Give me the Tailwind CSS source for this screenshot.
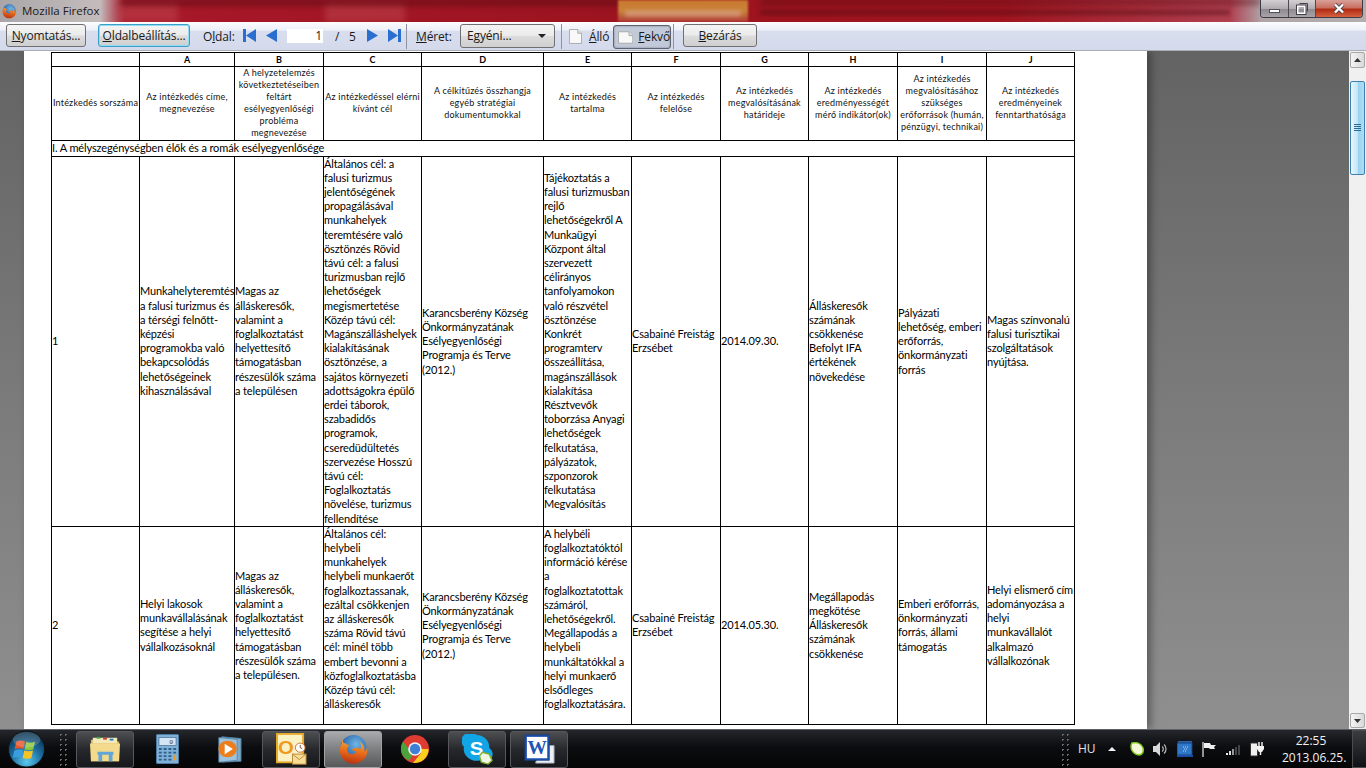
<!DOCTYPE html>
<html lang="hu">
<head>
  <meta charset="UTF-8">
  <title>Mozilla Firefox</title>
  <script src="https://cdn.jsdelivr.net/npm/@tailwindcss/browser@4"></script>
</head>
<body class="w-[1366px] h-[768px] overflow-hidden flex flex-col bg-black font-['Open_Sans',sans-serif]">

  <svg width="0" height="0" class="absolute">
    <defs>
      <radialGradient id="ffGlobe" cx="0.6" cy="0.35" r="0.7"><stop offset="0" stop-color="#6fb7e6"/><stop offset="1" stop-color="#1c4f9c"/></radialGradient>
      <linearGradient id="ffFox" x1="0.6" y1="0" x2="0.4" y2="1"><stop offset="0" stop-color="#f7b733"/><stop offset="0.55" stop-color="#e8681a"/><stop offset="1" stop-color="#b8320f"/></linearGradient>
      <symbol id="firefox" viewBox="0 0 32 32">
        <circle cx="16.5" cy="15" r="13" fill="url(#ffGlobe)"/>
        <path d="M6 6c-1 2-1 3-1 4-3 5-3 11 1 16 4 5 12 6 17 3 6-3 8-9 7-14-.5 2-1.500 3-2.500 3.500.5-4-1.500-8-5-10 2 3 2 6 .5 8-1-1.500-3-2-5-1.500-2 .5-3 1-3 2 1 1 3 .5 4 1.500-.5 2-3 3-5 2.500-3-.5-4.500-3-3.500-6 .5-1.500 1.500-2 1.500-3-1.500 0-3-1-3.500-2-1 .5-1.800.5-2.500-1.500z" fill="url(#ffFox)"/>
      </symbol>
      <symbol id="pagesheet" viewBox="0 0 14 16">
        <path d="M.5.500h9l4 4v11H.5z" fill="#f8f8f8" stroke="#a8a8a8"/><path d="M9.500.500v4h4" fill="#e2e2e2" stroke="#a8a8a8"/>
      </symbol>
    </defs>
  </svg>

  <!-- Title bar -->
  <div class="relative h-[22px] shrink-0 overflow-hidden flex items-center bg-[linear-gradient(90deg,#aaa6a8_0,#c4bcbc_100px,#a8182a_125px,#9c1420_600px,#a0141f_1000px,#b04050_1230px,#b0a4a8_1262px,#b4aeb0_100%)]">
    <div class="absolute left-[118px] top-[3px] w-[60px] h-[19px] bg-[#c04850]/50 blur-[3px]"></div>
    <div class="absolute left-[325px] top-[3px] w-[80px] h-[19px] bg-[#c04850]/50 blur-[3px]"></div>
    <div class="absolute left-[120px] top-0 w-[500px] h-[5px] bg-[#4e0a10]/70 blur-[3px]"></div>
    <div class="absolute left-[760px] top-0 w-[500px] h-[4px] bg-[#4e0a10]/70 blur-[3px]"></div>
    <div class="absolute left-[618px] top-0 w-[130px] h-[22px] bg-[linear-gradient(180deg,#c9782e_0,#c9843a_50%,#b03a38_100%)] blur-[1px]"></div>
    <div class="absolute left-[625px] top-[11px] w-[116px] h-[5px] bg-[#e2b4a8]/60 blur-[2px]"></div>
    <div class="absolute left-[760px] top-[10px] w-[470px] h-[5px] bg-[#4e0a10]/50 blur-[2px]"></div>
    <svg class="ml-[1px] w-[16px] h-[16px] shrink-0"><use href="#firefox"/></svg>
    <span class="relative ml-[5px] text-[11.500px] text-[#1a1a1a]">Mozilla Firefox</span>
    <div class="absolute left-[1260px] top-0 w-[103px] h-[18px] flex rounded-b-[4px] border border-t-0 border-[#3c3c44] overflow-hidden">
      <div class="w-[28px] flex items-center justify-center border-r border-[#4a4a52] bg-[linear-gradient(180deg,#d4d0d2_0,#b2acb0_50%,#8e8a90_55%,#a8a4a8_100%)]">
        <div class="mt-[5px] w-[11px] h-[4px] bg-white border border-[#50505a]"></div>
      </div>
      <div class="w-[27px] flex items-center justify-center border-r border-[#4a4a52] bg-[linear-gradient(180deg,#d4d0d2_0,#b2acb0_50%,#8e8a90_55%,#a8a4a8_100%)]">
        <svg width="12" height="12" viewBox="0 0 12 12"><path d="M3.500.500h8v8" fill="none" stroke="#40404a"/><rect x="1.500" y="3" width="7.500" height="7.500" fill="none" stroke="#fff" stroke-width="2"/><rect x=".5" y="2" width="9.500" height="9.500" fill="none" stroke="#40404a"/></svg>
      </div>
      <div class="flex-1 flex items-center justify-center bg-[linear-gradient(180deg,#d9a098_0,#c87062_45%,#b02c14_55%,#d86040_100%)]">
        <svg width="12" height="11" viewBox="0 0 12 11"><path d="M2 1.500l8 8M10 1.500l-8 8" stroke="#50404a" stroke-width="4"/><path d="M2 1.500l8 8M10 1.500l-8 8" stroke="#fff" stroke-width="2.400"/></svg>
      </div>
    </div>
  </div>

  <!-- Print preview toolbar -->
  <div class="h-[29px] shrink-0 flex items-start text-[12px] leading-[16px] tracking-[-0.15px] text-[#1a1a1a] bg-[linear-gradient(180deg,#fbfcfe_0,#eef1f8_28%,#d8deee_34%,#d4daeb_100%)] border-b border-[#a8adb8] [&>*]:shrink-0">
    <button class="ml-[6px] mt-[2px] w-[80px] h-[23px] rounded-[3px] border border-[#707070] bg-[linear-gradient(180deg,#f4f4f4_0,#ebebeb_48%,#dcdcdc_52%,#cfcfcf_100%)]"><u>N</u>yomtatás...</button>
    <button class="ml-[12px] mt-[2px] w-[92px] h-[23px] rounded-[3px] border border-[#3c9fc8] shadow-[inset_0_0_0_1px_#8fdcf4] bg-[linear-gradient(180deg,#f4f4f4_0,#ebebeb_48%,#dcdcdc_52%,#cfcfcf_100%)]"><u>O</u>ldalbeállítás...</button>
    <span class="ml-[13px] mt-[7px] w-[33px]">O<u>l</u>dal:</span>
    <svg class="ml-[7px] mt-[7px]" width="13" height="13" viewBox="0 0 13 13"><path d="M0 0h3v13H0zM13 0v13L3 6.500z" fill="#2a6fd0"/></svg>
    <svg class="ml-[10px] mt-[7px]" width="11" height="13" viewBox="0 0 11 13"><path d="M11 0v13L0 6.500z" fill="#2a6fd0"/></svg>
    <div class="ml-[10px] mt-[7px] w-[36px] h-[14px] bg-white text-right pr-[1px] leading-[14px]">1</div>
    <span class="ml-[12px] mt-[7px] w-[14px]">/</span>
    <span class="mt-[7px] w-[18px]">5</span>
    <svg class="mt-[7px]" width="11" height="13" viewBox="0 0 11 13"><path d="M0 0v13l11-6.500z" fill="#2a6fd0"/></svg>
    <svg class="ml-[10px] mt-[7px]" width="13" height="13" viewBox="0 0 13 13"><path d="M13 0h-3v13h3zM0 0v13l10-6.500z" fill="#2a6fd0"/></svg>
    <div class="ml-[5px] mt-[2px] w-px h-[25px] bg-[#8d92a0]"></div>
    <span class="ml-[9px] mt-[7px] w-[44px]"><u>M</u>éret:</span>
    <div class="mt-[2px] w-[95px] h-[24px] pl-[6px] pr-[8px] flex items-center justify-between rounded-[3px] border border-[#707070] bg-[linear-gradient(180deg,#f4f4f4_0,#ebebeb_48%,#dcdcdc_52%,#cfcfcf_100%)]">
      <span>Egyéni...</span>
      <svg width="8" height="4" viewBox="0 0 8 4"><path d="M0 0h8L4 4z" fill="#222"/></svg>
    </div>
    <div class="ml-[6px] mt-[2px] w-px h-[25px] bg-[#8d92a0]"></div>
    <svg class="ml-[7px] mt-[7px] w-[13px] h-[15px]"><use href="#pagesheet"/></svg>
    <span class="ml-[7px] mt-[7px] w-[24px]"><u>Á</u>lló</span>
    <div class="mt-[3px] w-[58px] h-[24px] pl-[4px] flex items-center gap-[5px] rounded-[3px] border border-[#5c6470] bg-[#c2c9d8] shadow-[inset_0_0_2px_#70788a]">
      <svg width="16" height="13" viewBox="0 0 16 13"><path d="M.5.500h11l4 4v8H.5z" fill="#f8f8f8" stroke="#a8a8a8"/><path d="M11.500.500v4h4" fill="#e2e2e2" stroke="#a8a8a8"/></svg>
      <span><u>F</u>ekvő</span>
    </div>
    <div class="ml-[2px] mt-[2px] w-px h-[25px] bg-[#8d92a0]"></div>
    <button class="ml-[9px] mt-[2px] w-[74px] h-[23px] rounded-[3px] border border-[#707070] bg-[linear-gradient(180deg,#f4f4f4_0,#ebebeb_48%,#dcdcdc_52%,#cfcfcf_100%)]"><u>B</u>ezárás</button>
  </div>

  <!-- Preview area -->
  <div class="h-[678px] shrink-0 flex overflow-hidden bg-[linear-gradient(180deg,#636363_0,#7a7a7a_50%,#8f8f8f_100%)]">
    <div class="ml-[24px] w-[1123px] h-full bg-white pl-[27px] pt-[1px] overflow-hidden shadow-[4px_0_8px_rgba(0,0,0,0.35)] font-['Lato',sans-serif] text-black">
      <table class="table-fixed border-collapse w-[1023px] text-[11px] leading-[14.2px] tracking-[-0.12px] whitespace-nowrap">
        <colgroup>
          <col class="w-[88px]"><col class="w-[95px]"><col class="w-[89px]"><col class="w-[98px]"><col class="w-[122px]"><col class="w-[88px]"><col class="w-[89px]"><col class="w-[88px]"><col class="w-[89px]"><col class="w-[89px]"><col class="w-[88px]">
        </colgroup>
        <tr class="h-[14px] text-[9px] leading-[12px] font-bold text-center [&>td]:border [&>td]:border-black [&>td]:p-0">
          <td></td><td>A</td><td>B</td><td>C</td><td>D</td><td>E</td><td>F</td><td>G</td><td>H</td><td>I</td><td>J</td>
        </tr>
        <tr class="h-[73px] text-[9px] leading-[12.100px] tracking-[0.22px] text-center text-[#111] [&>td]:border [&>td]:border-black [&>td]:p-0">
          <td>Intézkedés sorszáma</td>
          <td>Az intézkedés címe,<br>megnevezése</td>
          <td>A helyzetelemzés<br>következtetéseiben<br>feltárt<br>esélyegyenlőségi<br>probléma<br>megnevezése</td>
          <td>Az intézkedéssel elérni<br>kívánt cél</td>
          <td>A célkitűzés összhangja<br>egyéb stratégiai<br>dokumentumokkal</td>
          <td>Az intézkedés<br>tartalma</td>
          <td>Az intézkedés<br>felelőse</td>
          <td>Az intézkedés<br>megvalósításának<br>határideje</td>
          <td>Az intézkedés<br>eredményességét<br>mérő indikátor(ok)</td>
          <td>Az intézkedés<br>megvalósításához<br>szükséges<br>erőforrások (humán,<br>pénzügyi, technikai)</td>
          <td>Az intézkedés<br>eredményeinek<br>fenntarthatósága</td>
        </tr>
        <tr class="h-[16px] [&>td]:border [&>td]:border-black [&>td]:p-0">
          <td colspan="11" class="pl-px">I. A mélyszegénységben élők és a romák esélyegyenlősége</td>
        </tr>
        <tr class="h-[370px] [&>td]:border [&>td]:border-black [&>td]:p-0">
          <td>1</td>
          <td>Munkahelyteremtés<br>a falusi turizmus és<br>a térségi felnőtt-<br>képzési<br>programokba való<br>bekapcsolódás<br>lehetőségeinek<br>kihasználásával</td>
          <td>Magas az<br>álláskeresők,<br>valamint a<br>foglalkoztatást<br>helyettesítő<br>támogatásban<br>részesülők száma<br>a településen</td>
          <td>Általános cél: a<br>falusi turizmus<br>jelentőségének<br>propagálásával<br>munkahelyek<br>teremtésére való<br>ösztönzés Rövid<br>távú cél: a falusi<br>turizmusban rejlő<br>lehetőségek<br>megismertetése<br>Közép távú cél:<br>Magánszálláshelyek<br>kialakításának<br>ösztönzése, a<br>sajátos környezeti<br>adottságokra épülő<br>erdei táborok,<br>szabadidős<br>programok,<br>cseredüdültetés<br>szervezése Hosszú<br>távú cél:<br>Foglalkoztatás<br>növelése, turizmus<br>fellendítése</td>
          <td>Karancsberény Község<br>Önkormányzatának<br>Esélyegyenlőségi<br>Programja és Terve<br>(2012.)</td>
          <td>Tájékoztatás a<br>falusi turizmusban<br>rejlő<br>lehetőségekről A<br>Munkaügyi<br>Központ által<br>szervezett<br>célirányos<br>tanfolyamokon<br>való részvétel<br>ösztönzése<br>Konkrét<br>programterv<br>összeállítása,<br>magánszállások<br>kialakítása<br>Résztvevők<br>toborzása Anyagi<br>lehetőségek<br>felkutatása,<br>pályázatok,<br>szponzorok<br>felkutatása<br>Megvalósítás</td>
          <td>Csabainé Freistág<br>Erzsébet</td>
          <td>2014.09.30.</td>
          <td>Álláskeresők<br>számának<br>csökkenése<br>Befolyt IFA<br>értékének<br>növekedése</td>
          <td>Pályázati<br>lehetőség, emberi<br>erőforrás,<br>önkormányzati<br>forrás</td>
          <td>Magas színvonalú<br>falusi turisztikai<br>szolgáltatások<br>nyújtása.</td>
        </tr>
        <tr class="h-[198px] [&>td]:border [&>td]:border-black [&>td]:p-0">
          <td>2</td>
          <td>Helyi lakosok<br>munkavállalásának<br>segítése a helyi<br>vállalkozásoknál</td>
          <td>Magas az<br>álláskeresők,<br>valamint a<br>foglalkoztatást<br>helyettesítő<br>támogatásban<br>részesülők száma<br>a településen.</td>
          <td class="align-top">Általános cél:<br>helybeli<br>munkahelyek<br>helybeli munkaerőt<br>foglalkoztassanak,<br>ezáltal csökkenjen<br>az álláskeresők<br>száma Rövid távú<br>cél: minél több<br>embert bevonni a<br>közfoglalkoztatásba<br>Közép távú cél:<br>álláskeresők</td>
          <td>Karancsberény Község<br>Önkormányzatának<br>Esélyegyenlőségi<br>Programja és Terve<br>(2012.)</td>
          <td class="align-top">A helybéli<br>foglalkoztatóktól<br>információ kérése<br>a<br>foglalkoztatottak<br>számáról,<br>lehetőségekről.<br>Megállapodás a<br>helybeli<br>munkáltatókkal a<br>helyi munkaerő<br>elsődleges<br>foglalkoztatására.</td>
          <td>Csabainé Freistág<br>Erzsébet</td>
          <td>2014.05.30.</td>
          <td>Megállapodás<br>megkötése<br>Álláskeresők<br>számának<br>csökkenése</td>
          <td>Emberi erőforrás,<br>önkormányzati<br>forrás, állami<br>támogatás</td>
          <td>Helyi elismerő cím<br>adományozása a<br>helyi<br>munkavállalót<br>alkalmazó<br>vállalkozónak</td>
        </tr>
      </table>
    </div>

    <!-- Scrollbar -->
    <div class="ml-auto w-[17px] h-full pt-[1px] pb-[1px] flex flex-col items-center bg-[#f0f0f0]">
      <div class="w-[15px] h-[16px] flex items-center justify-center rounded-[2px] border border-[#a8a8a8] bg-[linear-gradient(90deg,#f4f4f4,#d8d8d8)]">
        <svg width="7" height="4" viewBox="0 0 7 4"><path d="M3.500 0L7 4H0z" fill="#333"/></svg>
      </div>
      <div class="mt-[13px] w-[15px] h-[94px] flex items-center justify-center rounded-[2px] border border-[#3c7fb1] bg-[linear-gradient(90deg,#e8f6fd_0,#c4e5f6_50%,#98d1ef_55%,#b0def5_100%)]">
        <svg width="7" height="8" viewBox="0 0 7 8"><path d="M0 .5h7M0 2.500h7M0 4.500h7M0 6.500h7" stroke="#2a6a94"/></svg>
      </div>
      <div class="mt-auto w-[15px] h-[15px] flex items-center justify-center rounded-[2px] border border-[#a8a8a8] bg-[linear-gradient(90deg,#f4f4f4,#d8d8d8)]">
        <svg width="7" height="4" viewBox="0 0 7 4"><path d="M0 0h7L3.500 4z" fill="#333"/></svg>
      </div>
    </div>
  </div>

  <!-- Taskbar -->
  <div class="relative flex-1 flex items-center border-t border-[#5c6066] bg-[linear-gradient(180deg,#23262b_0,#0c0d10_45%,#050506_100%)] text-white [&>*]:shrink-0">
    <svg class="ml-[7px]" width="39" height="38" viewBox="0 0 39 39">
      <defs><radialGradient id="orb" cx="0.5" cy="0.85" r="0.8"><stop offset="0" stop-color="#5cc8ee"/><stop offset="0.55" stop-color="#1a6a9c"/><stop offset="1" stop-color="#0b2e48"/></radialGradient></defs>
      <circle cx="19.500" cy="19.500" r="18.500" fill="url(#orb)" stroke="#111"/>
      <path d="M9 12c3-1.500 5.500-1.500 9-.3l-1.700 7.800c-3-1-6-1-9 .2z" fill="#e8552a"/>
      <path d="M19.300 12c3 1.300 5.500 1.300 9 0l-1.800 7.800c-3 1.200-6 1.200-9 .1z" fill="#8cc63f"/>
      <path d="M7 21c3-1.200 6-1.200 9-.2L14.400 28.500c-3-1-6-1-9 .3z" fill="#3a9ede"/>
      <path d="M17.200 21.100c3 1 6 1 9-.1l-1.700 7.700c-3 1.200-6 1.200-9 .1z" fill="#f6c326"/>
      <ellipse cx="19.500" cy="10" rx="14" ry="8" fill="#fff" opacity=".18"/>
    </svg>
    <div class="ml-[12px] w-[10px] h-[34px] bg-[radial-gradient(#6a6a6a_1px,transparent_1px)] bg-[length:5px_5px]"></div>
    <div class="ml-[8px] flex gap-[4px]">
      <div class="w-[58px] h-[37px] flex items-center justify-center rounded-[3px] border border-[#55585c] bg-[linear-gradient(180deg,#4c4e52_0,#26282b_50%,#17181b_100%)]">
        <svg width="34" height="30" viewBox="0 0 34 32"><path d="M2 6h12l2 2h16v21H2z" fill="#d9b95c"/><path d="M4 4h26v6H4z" fill="#f4e9b8"/><path d="M8 3h4v2H8z" fill="#37a84a"/><path d="M15 4h4v2h-4z" fill="#c83a2c"/><path d="M22 5h4v2h-4z" fill="#2f7ac8"/><path d="M1 10h32l-1 19H2z" fill="#f3da8c"/><path d="M9 19h17v3H9zM10 22h4v7h-4zM21 22h4v7h-4z" fill="#62a6d6"/></svg>
      </div>
      <div class="w-[58px] h-[37px] flex items-center justify-center">
        <svg width="23" height="30" viewBox="0 0 24 34" preserveAspectRatio="none"><rect x=".5" y=".5" width="23" height="33" rx="1" fill="#7fb0d8" stroke="#4d7ea8"/><rect x="3" y="4" width="18" height="9" fill="#d4e6f4" stroke="#5a7ea0"/><text x="18" y="11.500" font-size="7" text-anchor="end" font-family="Liberation Mono" fill="#444">0</text><path d="M3 16h3v2H3zM8 16h3v2H8zM13 16h3v2h-3zM18 16h3v2h-3zM3 20h3v2H3zM8 20h3v2H8zM13 20h3v2h-3zM18 20h3v2h-3zM3 24h3v2H3zM8 24h3v2H8zM13 24h3v2h-3zM3 28h3v2H3zM8 28h3v2H8zM13 28h3v2h-3z" fill="#2f5d86"/><path d="M18 24h3v6h-3z" fill="#f09a2a"/></svg>
      </div>
      <div class="w-[58px] h-[37px] flex items-center justify-center">
        <svg width="26" height="28" viewBox="0 0 27 32" preserveAspectRatio="none"><path d="M6 2l20 2v26L6 31z" fill="#7fa9c8" stroke="#4d7a9e"/><path d="M3 3l19 2v24L3 31z" fill="#9cc2de" stroke="#5a88aa"/><circle cx="12" cy="16" r="9.500" fill="#ee7d1c"/><path d="M9 10l8.500 6L9 22z" fill="#fff"/></svg>
      </div>
      <div class="w-[58px] h-[37px] flex items-center justify-center rounded-[3px] border border-[#55585c] bg-[linear-gradient(180deg,#4c4e52_0,#26282b_50%,#17181b_100%)]">
        <svg width="31" height="33" viewBox="0 0 32 36" preserveAspectRatio="none"><rect x="1" y="1" width="27" height="31" fill="#fbf2c4" stroke="#e6a825" stroke-width="2"/><text x="2" y="23" font-size="21" font-weight="700" font-family="Liberation Sans" fill="#ef9a1e">O</text><circle cx="25" cy="16" r="5" fill="#fff" stroke="#d06d20"/><path d="M25 13v3l2 1" stroke="#7a4a20" fill="none"/><rect x="17" y="23" width="14" height="11" fill="#f7dd96" stroke="#b5893a"/><path d="M17 23l7 6 7-6" fill="none" stroke="#b5893a"/></svg>
      </div>
      <div class="w-[58px] h-[37px] flex items-center justify-center rounded-[3px] border border-[#a0a2a4] bg-[linear-gradient(180deg,#a8aaac_0,#7c7e80_50%,#56585a_100%)]">
        <svg class="w-[32px] h-[32px]"><use href="#firefox"/></svg>
      </div>
      <div class="w-[58px] h-[37px] flex items-center justify-center">
        <svg width="28" height="28" viewBox="0 0 28 28"><circle cx="14" cy="14" r="14" fill="#de3b31"/><path d="M14 14L2 21A14 14 0 0 1 2.100 6.600L8 14z" fill="#4aa43c"/><path d="M14 14h13.600A14 14 0 0 1 12 27.900L20 18z" fill="#f9cf1c"/><path d="M14 14L8.500 25.500A14 14 0 0 1 2 21z" fill="#4aa43c"/><circle cx="14" cy="14" r="6.800" fill="#f2f2f2"/><circle cx="14" cy="14" r="5.200" fill="#3f7fd4"/></svg>
      </div>
      <div class="w-[58px] h-[37px] flex items-center justify-center rounded-[3px] border border-[#55585c] bg-[linear-gradient(180deg,#4c4e52_0,#26282b_50%,#17181b_100%)]">
        <svg width="31" height="31" viewBox="0 0 32 34" preserveAspectRatio="none"><path d="M15 1a13 13 0 0 1 13 14 8 8 0 0 1-10 14A13 13 0 0 1 2 14 8 8 0 0 1 15 1z" fill="#12a5e6"/><text x="15" y="23" font-size="21" font-weight="700" text-anchor="middle" font-family="Liberation Sans" fill="#fff">S</text><path d="M21 20l7 2 3 7-4 4-7-2-2-7z" fill="#f2f5e6" stroke="#7fb02c" stroke-width="1.500"/></svg>
      </div>
      <div class="w-[58px] h-[37px] flex items-center justify-center rounded-[3px] border border-[#55585c] bg-[linear-gradient(180deg,#4c4e52_0,#26282b_50%,#17181b_100%)]">
        <svg width="31" height="31" viewBox="0 0 32 32"><path d="M18 12h13v18H12z" fill="#eceff4" stroke="#a8b0bc"/><rect x="1" y="1" width="25" height="26" fill="#1f55b4" stroke="#183f88"/><rect x="3" y="3" width="21" height="22" fill="#fff"/><text x="13.500" y="21" font-size="20" font-weight="700" text-anchor="middle" font-family="Liberation Serif" fill="#1f55b4">W</text></svg>
      </div>
    </div>

    <!-- System tray -->
    <div class="ml-[492px] w-[10px] h-[34px] bg-[radial-gradient(#6a6a6a_1px,transparent_1px)] bg-[length:5px_5px]"></div>
    <span class="ml-[8px] w-[30px] text-[12px] text-[#e4e4e4]">HU</span>
    <svg width="8" height="4" viewBox="0 0 8 4"><path d="M4 0l4 4H0z" fill="#f0f0f0"/></svg>
    <svg class="ml-[14px]" width="14" height="14" viewBox="0 0 14 14"><path d="M2 1c4-1 9 0 11 5 1 4-1 7-4 7-4 0-8-4-8-8 0-2 0-3 1-4z" fill="#f4f8d8" stroke="#7cc818" stroke-width="1.500"/></svg>
    <svg class="ml-[9px]" width="15" height="14" viewBox="0 0 15 14"><path d="M0 4h3l4-4v14l-4-4H0z" fill="#d8d8d8"/><path d="M9 4.500a3 3 0 0 1 0 5M11 2.500a6 6 0 0 1 0 9" fill="none" stroke="#bbb" stroke-width="1.200"/></svg>
    <svg class="ml-[9px]" width="16" height="16" viewBox="0 0 16 16"><rect x="1" y="0" width="14" height="12" fill="#2a62a8"/><rect x="0" y="2" width="15" height="12" fill="#2f78c8" stroke="#1b3f7c"/><path d="M0 15h16" stroke="#2060d0" stroke-width="1.500"/><path d="M6 6h1M8 6h1M10 6h1M7 8h1M9 8h1M6 10h1M8 10h1" stroke="#b8d8f0"/></svg>
    <svg class="ml-[9px]" width="14" height="15" viewBox="0 0 14 15"><path d="M1 0v15" stroke="#f0f0f0" stroke-width="1.200"/><path d="M2 1h6l1 2h5l-2 2 1 2H8L7 6H2z" fill="#f0f0f0"/></svg>
    <svg class="ml-[10px]" width="15" height="11" viewBox="0 0 15 11"><path d="M0 9h2v2H0z" fill="#eee"/><path d="M3 7h2v4H3z" fill="#ddd"/><path d="M6 5h2v6H6z" fill="#999"/><path d="M9 3h2v8H9zM12 1h2v10h-2z" fill="#444"/></svg>
    <svg class="ml-[9px]" width="14" height="16" viewBox="0 0 14 16"><rect x=".5" y="2" width="7" height="13" rx="1" fill="#f0f0f0" stroke="#333"/><path d="M9 1v4M12 1v4" stroke="#eee" stroke-width="1.500"/><path d="M7 5h7v3l-2 3H9L7 8z" fill="#f4f4f4"/><path d="M10.500 11v3" stroke="#eee" stroke-width="1.500"/></svg>
    <div class="ml-[18px] w-[58px] text-center text-[12px] leading-[17px] text-[#f2f2f2] whitespace-nowrap">
      <div>22:55</div>
      <div>2013.06.25.</div>
    </div>
    <div class="ml-[12px] w-[14px] h-[38px] border border-[#4a4c50] border-r-0 bg-[linear-gradient(180deg,#3a3c40,#101114)]"></div>
  </div>
</body>
</html>
